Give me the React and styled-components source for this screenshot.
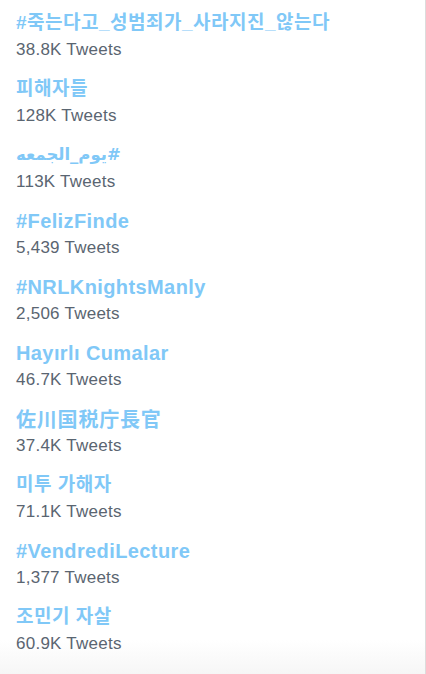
import React from "react";
import styled, { createGlobalStyle } from "styled-components";

const Global = createGlobalStyle`
  html, body { margin: 0; padding: 0; background: #ffffff; }
  body { font-family: "Liberation Sans", Arial, "Noto Sans CJK KR", sans-serif; }
`;

const Panel = styled.div`
  box-sizing: border-box;
  width: 426px;
  height: 674px;
  border-right: 1px solid #dcdcdc;
  background: linear-gradient(to bottom, #ffffff 0px, #ffffff 640px, #f6f6f6 674px);
  display: flex;
  flex-direction: column;
  overflow: hidden;
`;

const List = styled.ul`
  list-style: none;
  margin: 0;
  padding: 0;
  display: flex;
  flex-direction: column;
`;

const Item = styled.li`
  height: 66px;
  box-sizing: border-box;
  padding: 11px 0 7px 16px;
  display: flex;
  flex-direction: column;
  gap: 5px;
`;

const fontFor = {
  latin: `"Liberation Sans", Arial, "Noto Sans CJK KR", sans-serif`,
  ko: `"Liberation Sans", "Noto Sans CJK KR", sans-serif`,
  ja: `"Noto Sans CJK JP", sans-serif`,
  ar: `"DejaVu Sans", sans-serif`,
};
const sizeFor = { latin: "20px", ko: "19px", ja: "20px", ar: "16.5px" };
const spacingFor = { latin: "0.4px", ko: "0.5px", ja: "0.8px", ar: "0px" };

const Title = styled.a`
  display: block;
  height: 24px;
  line-height: 24px;
  font-family: ${(p) => fontFor[p.$script]};
  font-size: ${(p) => sizeFor[p.$script]};
  letter-spacing: ${(p) => spacingFor[p.$script]};
  font-weight: 700;
  color: #80c8f7;
  text-decoration: none;
  white-space: nowrap;
`;

const Rtl = styled.span`
  display: inline-block;
  direction: rtl;
  unicode-bidi: isolate;
`;

const Count = styled.div`
  height: 20px;
  line-height: 20px;
  font-family: "Liberation Sans", Arial, sans-serif;
  font-size: 17px;
  letter-spacing: 0.25px;
  color: #5a6571;
  white-space: nowrap;
`;

const trends = [
  { name: "#죽는다고_성범죄가_사라지진_않는다", count: "38.8K Tweets", script: "ko" },
  { name: "피해자들", count: "128K Tweets", script: "ko" },
  { name: "#يوم_الجمعه", count: "113K Tweets", script: "ar" },
  { name: "#FelizFinde", count: "5,439 Tweets", script: "latin" },
  { name: "#NRLKnightsManly", count: "2,506 Tweets", script: "latin" },
  { name: "Hayırlı Cumalar", count: "46.7K Tweets", script: "latin" },
  { name: "佐川国税庁長官", count: "37.4K Tweets", script: "ja" },
  { name: "미투 가해자", count: "71.1K Tweets", script: "ko" },
  { name: "#VendrediLecture", count: "1,377 Tweets", script: "latin" },
  { name: "조민기 자살", count: "60.9K Tweets", script: "ko" },
];

export default function App() {
  return (
    <>
      <Global />
      <Panel>
        <List>
          {trends.map((t) => (
            <Item key={t.name}>
              <Title href="#" $script={t.script}>
                {t.script === "ar" ? <Rtl>{t.name}</Rtl> : t.name}
              </Title>
              <Count>{t.count}</Count>
            </Item>
          ))}
        </List>
      </Panel>
    </>
  );
}
